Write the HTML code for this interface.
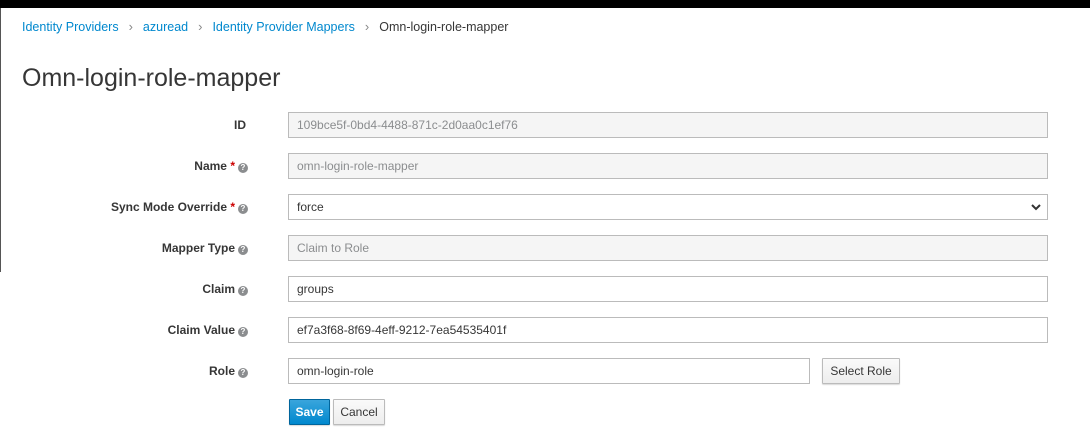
<!DOCTYPE html>
<html><head><style>
body{margin:0;width:1090px;height:437px;overflow:hidden;background:#fff;font-family:"Liberation Sans",sans-serif;font-size:12px;color:#363636;position:relative}
.top{position:absolute;left:0;top:0;width:1090px;height:8px;background:#000}
.lb{position:absolute;left:0;top:8px;width:1px;height:264px;background:#555}
.bc{position:absolute;top:19px;left:22px;font-size:12.5px;white-space:nowrap}
.bc a{color:#0088ce;text-decoration:none}
.bc .s{color:#888;margin:0 10px;font-size:13px}
h1{position:absolute;left:22px;top:64px;margin:0;font-size:25px;font-weight:300;color:#363636}
.row{position:absolute;left:0;width:1090px;height:26px}
.lab{position:absolute;right:842px;top:6px;font-weight:bold;color:#363636;white-space:nowrap;font-size:12px}
.req{color:#c00}
.q{display:inline-block;width:10px;height:10px;border-radius:50%;background:#8b8d8f;color:#fff;font-size:8px;line-height:10px;text-align:center;vertical-align:0px;margin-left:3px;font-weight:bold}
.in{position:absolute;left:288px;top:0;width:758px;height:24px;border:1px solid #bbb;background:#fff;box-sizing:content-box;padding:0;line-height:24px;text-indent:8px;color:#363636}
.ro{background:#f5f5f5;color:#8b8d8f}
.btn{position:absolute;height:24px;border:1px solid #bbb;border-radius:1px;background:linear-gradient(#fafafa,#ededed);line-height:24px;text-align:center;color:#363636;box-shadow:0 1px 1px rgba(0,0,0,.15)}
</style></head><body>
<div class="top"></div><div class="lb"></div>
<div class="bc"><a>Identity Providers</a><span class="s">›</span><a>azuread</a><span class="s">›</span><a>Identity Provider Mappers</a><span class="s">›</span><span>Omn-login-role-mapper</span></div>
<h1>Omn-login-role-mapper</h1>
<div class="row" style="top:112px"><div class="lab" style="right:844px">ID</div><div class="in ro">109bce5f-0bd4-4488-871c-2d0aa0c1ef76</div></div>
<div class="row" style="top:153px"><div class="lab">Name <span class="req">*</span><span class="q">?</span></div><div class="in ro">omn-login-role-mapper</div></div>
<div class="row" style="top:194px"><div class="lab">Sync Mode Override <span class="req">*</span><span class="q">?</span></div><div class="in">force<svg style="position:absolute;right:6px;top:9px" width="10" height="7" viewBox="0 0 10 7"><path d="M1 1l4 4 4-4" stroke="#333" stroke-width="2" fill="none"/></svg></div></div>
<div class="row" style="top:235px"><div class="lab">Mapper Type<span class="q">?</span></div><div class="in ro">Claim to Role</div></div>
<div class="row" style="top:276px"><div class="lab">Claim<span class="q">?</span></div><div class="in">groups</div></div>
<div class="row" style="top:317px"><div class="lab">Claim Value<span class="q">?</span></div><div class="in">ef7a3f68-8f69-4eff-9212-7ea54535401f</div></div>
<div class="row" style="top:358px"><div class="lab">Role<span class="q">?</span></div><div class="in" style="width:520px">omn-login-role</div>
<div class="btn" style="left:822px;top:0;width:76px">Select Role</div></div>
<div class="btn" style="left:289px;top:399px;width:39px;background:linear-gradient(#39a5dc,#0088ce);border-color:#00659c;color:#fff;font-weight:bold">Save</div>
<div class="btn" style="left:333px;top:399px;width:50px">Cancel</div>
</body></html>
